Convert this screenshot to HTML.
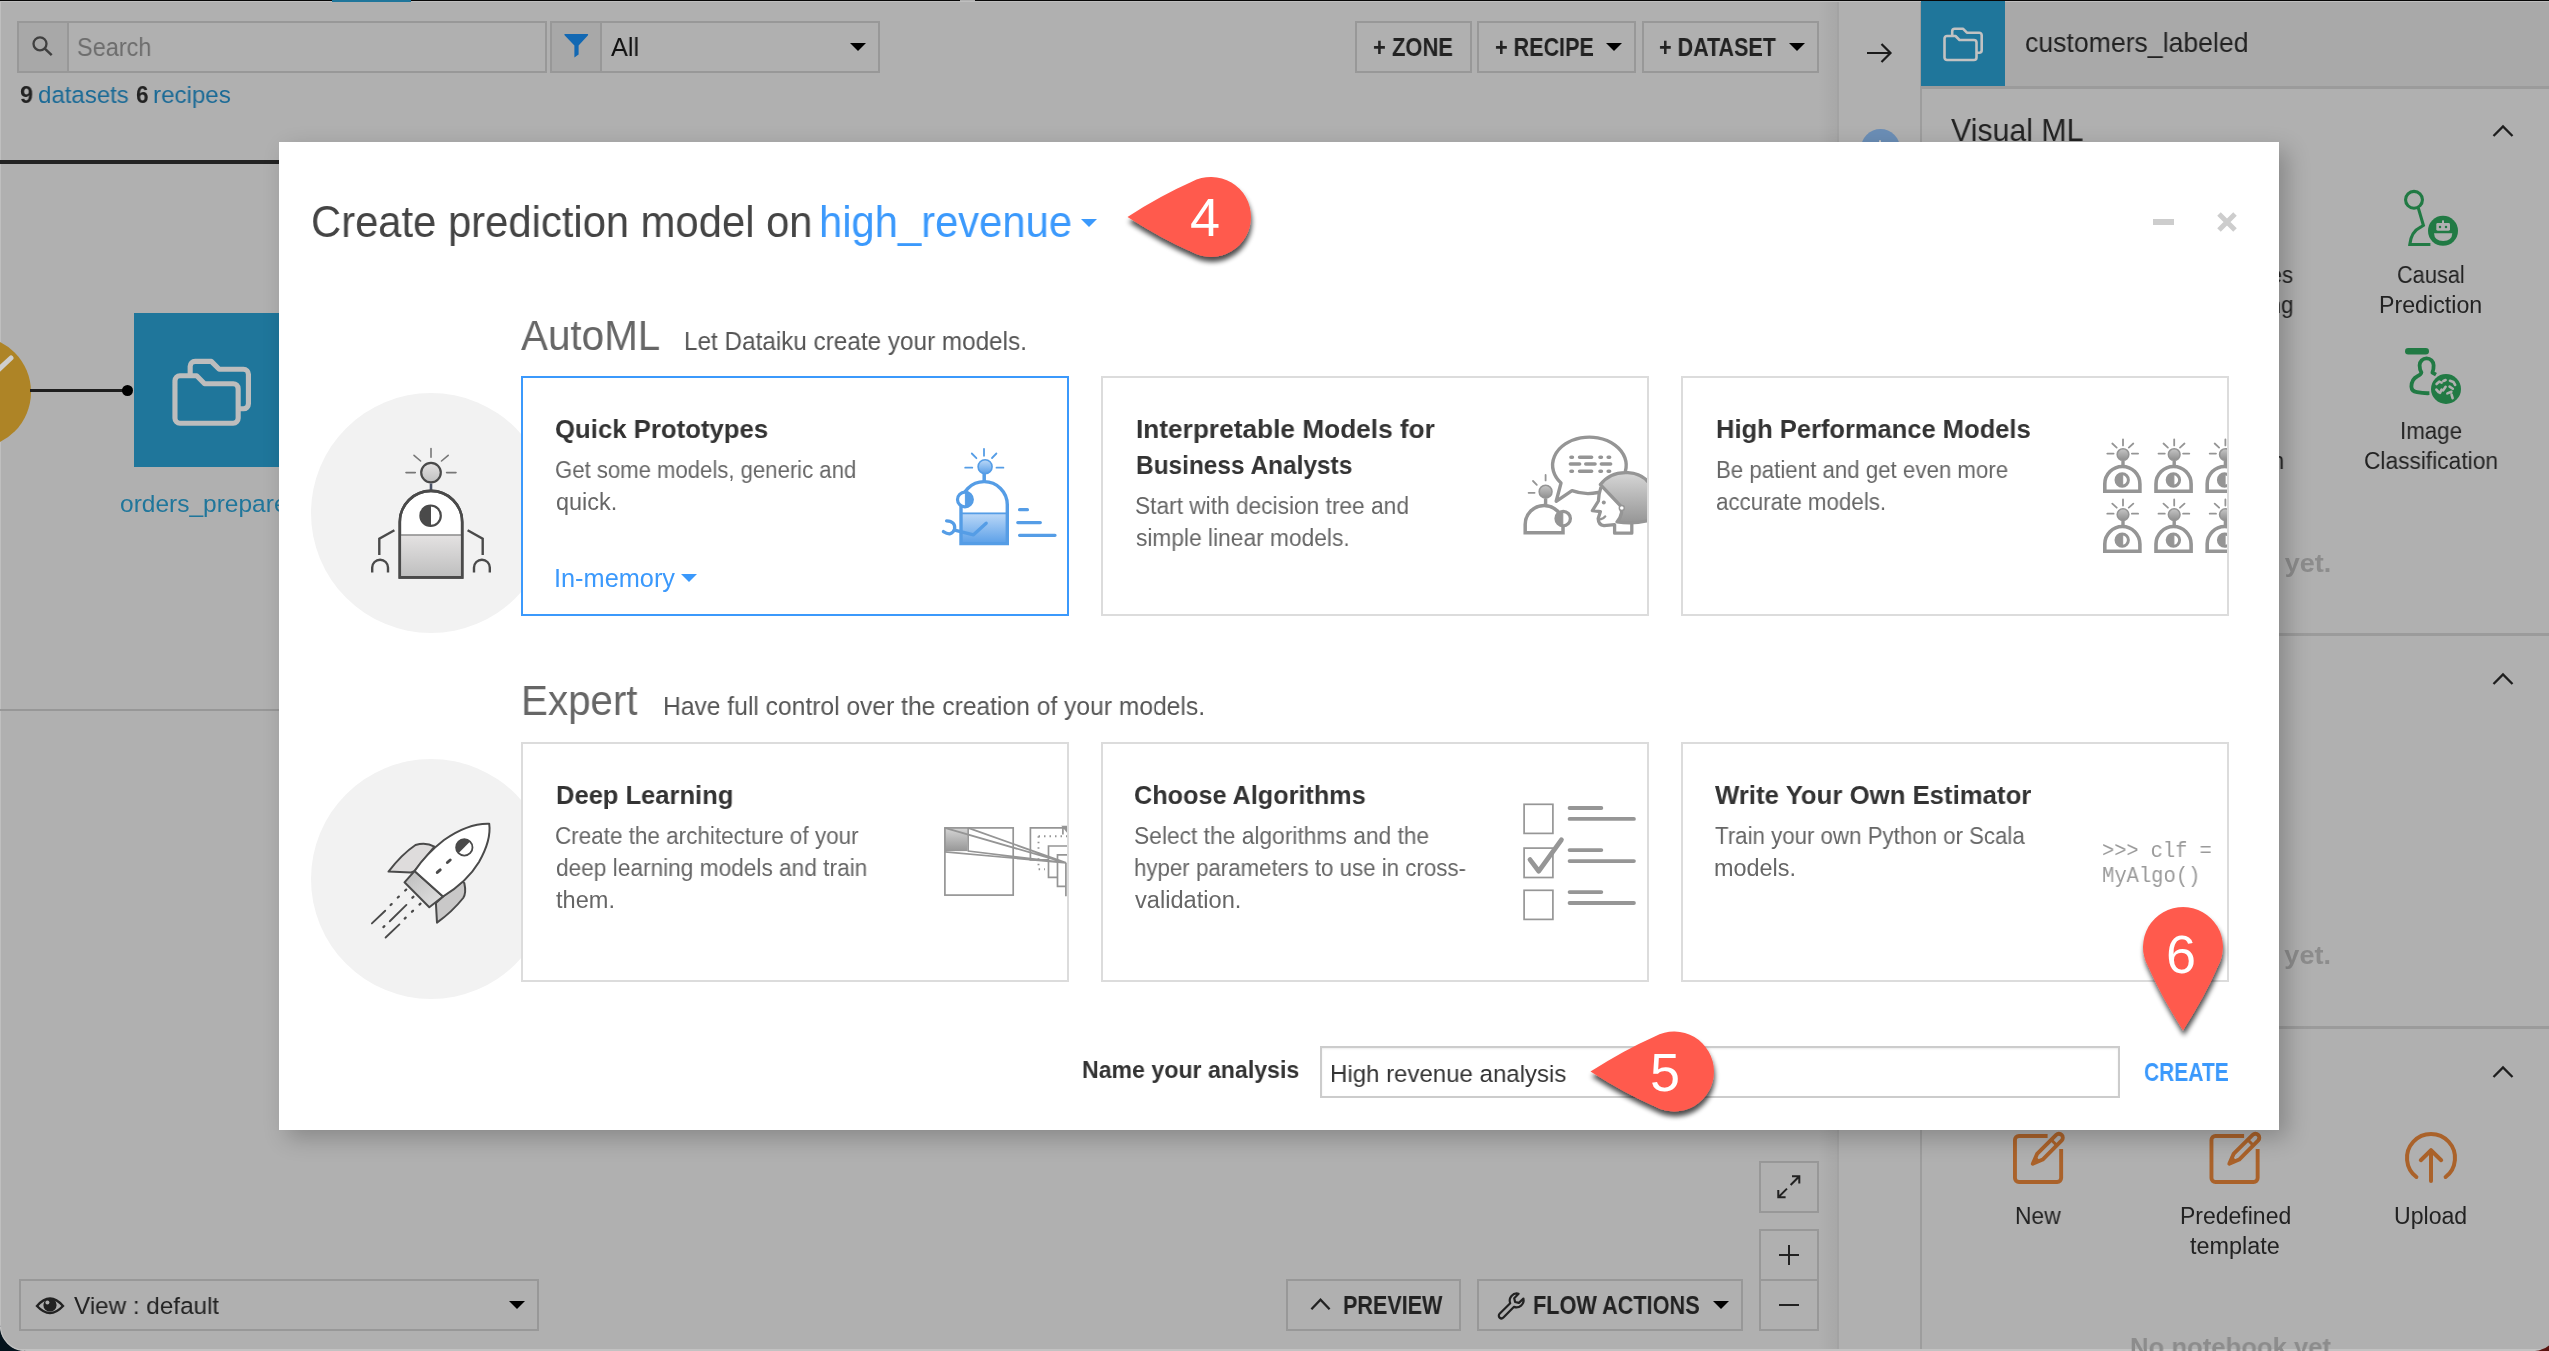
<!DOCTYPE html>
<html><head><meta charset="utf-8"><title>Create prediction model</title>
<style>
html,body{margin:0;padding:0}
html{width:2549px;height:1351px;overflow:hidden}
body{width:2549px;height:1351px;overflow:hidden;position:relative;background:#b0b0b0;font-family:"Liberation Sans",sans-serif}
.a{position:absolute;box-sizing:border-box}
.t{position:absolute;white-space:pre;transform-origin:0 0;display:block;will-change:transform}
.bx{position:absolute;box-sizing:border-box;border:2px solid #989898}
.card{position:absolute;box-sizing:border-box;border:2px solid #dcdcdc;background:#fff;z-index:15;overflow:hidden}
svg{position:absolute;overflow:visible}
.car{position:absolute;width:0;height:0;border-left:8px solid transparent;border-right:8px solid transparent;border-top:8.5px solid #000;margin-left:-0.4px}
</style></head><body>
<!-- top window edge -->
<div class="a" style="left:0;top:0;width:2549px;height:1px;background:#080808"></div>
<div class="a" style="left:0;top:1px;width:2549px;height:1px;background:#bfbfbf"></div>
<div class="a" style="left:0;top:1px;width:1px;height:1336px;background:#bfbfbf"></div>
<div class="a" style="left:332px;top:0;width:79px;height:1.5px;background:#1f769b"></div>
<div class="a" style="left:960px;top:0;width:15px;height:1px;background:#b0b0b0"></div>
<!-- search -->
<div class="bx" style="left:17px;top:21px;width:530px;height:52px"></div>
<div class="a" style="left:19px;top:23px;width:48px;height:48px;background:#a8a8a8"></div>
<div class="a" style="left:67px;top:23px;width:2px;height:48px;background:#989898"></div>
<svg style="left:30px;top:34px" width="26" height="26" viewBox="0 0 26 26"><circle cx="10" cy="9.8" r="6.5" fill="none" stroke="#404040" stroke-width="2.3"/><path d="M14.8 14.6 L21.7 21.1" stroke="#404040" stroke-width="2.6" fill="none"/></svg>
<!-- filter -->
<div class="bx" style="left:550px;top:21px;width:330px;height:52px"></div>
<div class="a" style="left:552px;top:23px;width:48px;height:48px;background:#a8a8a8"></div>
<div class="a" style="left:600px;top:23px;width:2px;height:48px;background:#989898"></div>
<svg style="left:564px;top:33px" width="25" height="25" viewBox="0 0 25 25"><path d="M0.6 1 H23.8 Q24.6 1.6 23.8 2.6 L14.6 12.6 V21.6 L10.4 24.4 V12.6 L0.8 2.6 Q0 1.6 0.6 1 Z" fill="#1268b3"/></svg>
<div class="car" style="left:850px;top:43px"></div>
<!-- top buttons -->
<div class="bx" style="left:1355px;top:21px;width:117px;height:52px"></div>
<div class="bx" style="left:1477px;top:21px;width:159px;height:52px"></div>
<div class="bx" style="left:1642px;top:21px;width:177px;height:52px"></div>
<div class="car" style="left:1606.6px;top:43px"></div>
<div class="car" style="left:1789.4px;top:43px"></div>
<!-- flow -->
<div class="a" style="left:0;top:160px;width:300px;height:4px;background:#232323"></div>
<div class="a" style="left:0;top:709px;width:300px;height:2px;background:#979797"></div>
<div class="a" style="left:-82px;top:335.6px;width:112.8px;height:112.8px;border-radius:50%;background:#ae8426"></div>
<svg style="left:0;top:350px" width="20" height="30" viewBox="0 0 20 30"><path d="M-4 22 L11 8" stroke="#cfcfcf" stroke-width="5" stroke-linecap="round"/></svg>
<div class="a" style="left:30px;top:389px;width:97px;height:3px;background:#1e1e1e"></div>
<div class="a" style="left:121.5px;top:385px;width:11px;height:11px;border-radius:50%;background:#000"></div>
<div class="a" style="left:134px;top:313px;width:154px;height:154px;background:#1f769b"></div>
<svg style="left:172px;top:358px" width="79" height="68" viewBox="0 0 40 34.4"><g fill="none" stroke="#bdbdbd" stroke-width="2.6" stroke-linejoin="round"><path d="M1.5 11.5 a2.5 2.5 0 0 1 2.5 -2.5 h8.5 l4 4 h14.5 a2.5 2.5 0 0 1 2.5 2.5 v15 a2.5 2.5 0 0 1 -2.5 2.5 h-27 a2.5 2.5 0 0 1 -2.5 -2.5 z"/><path d="M9.2 8.6 v-4.4 a2.5 2.5 0 0 1 2.5 -2.5 h8.2 l4 4 h12.3 a2.5 2.5 0 0 1 2.5 2.5 v15 a2.5 2.5 0 0 1 -2.5 2.5 h-2.4"/></g></svg>
<!-- bottom bar -->
<div class="bx" style="left:19px;top:1279px;width:520px;height:52px"></div>
<svg style="left:36px;top:1293px" width="28" height="26" viewBox="0 0 28 26"><path d="M1 13 Q14 -2 27 13 Q14 27 1 13 Z" fill="none" stroke="#222" stroke-width="2.4"/><circle cx="14" cy="12" r="6.6" fill="#222"/><circle cx="11.4" cy="9.4" r="2" fill="#b0b0b0"/></svg>
<div class="car" style="left:509px;top:1301px"></div>
<div class="bx" style="left:1285.5px;top:1279px;width:175.5px;height:52px"></div>
<svg style="left:1310px;top:1297px" width="21" height="14.6" viewBox="0 0 23 16"><path d="M1.5 13.5 L11.5 3 L21.5 13.5" fill="none" stroke="#222" stroke-width="2.5"/></svg>
<div class="bx" style="left:1476.5px;top:1279px;width:266.5px;height:52px"></div>
<svg style="left:1497px;top:1291px" width="29" height="29" viewBox="0 0 29 29"><path d="M26.4 7.6 a7.2 7.2 0 0 1 -9.6 8.3 L6.4 26.6 a2.6 2.6 0 0 1 -3.8 -3.8 L13.2 12.3 a7.2 7.2 0 0 1 8.4 -9.6 L17.2 7.2 l0.9 3.8 3.8 0.9 z" fill="none" stroke="#222" stroke-width="2.2" stroke-linejoin="round"/></svg>
<div class="car" style="left:1713.7px;top:1301px"></div>
<div class="bx" style="left:1759px;top:1161px;width:60px;height:52px"></div>
<svg style="left:1776.2px;top:1174.2px" width="25.6" height="25.6" viewBox="0 0 28 28"><g fill="none" stroke="#222" stroke-width="2.2"><path d="M16 12 L25.5 2.5 M17.5 2.5 h8 v8"/><path d="M12 16 L2.5 25.5 M10.5 25.5 h-8 v-8"/></g></svg>
<div class="bx" style="left:1759px;top:1229px;width:60px;height:102px"></div>
<div class="a" style="left:1759px;top:1279px;width:60px;height:2px;background:#989898"></div>
<div class="a" style="left:1779px;top:1254px;width:20px;height:2px;background:#222"></div>
<div class="a" style="left:1788px;top:1245px;width:2px;height:20px;background:#222"></div>
<div class="a" style="left:1779px;top:1304px;width:20px;height:2px;background:#222"></div>
<!-- right panel -->
<div class="a" style="left:1818px;top:2px;width:20px;height:1349px;background:linear-gradient(to right,rgba(0,0,0,0),rgba(0,0,0,0.05))"></div>
<div class="a" style="left:1837px;top:2px;width:2px;height:1349px;background:#a3a3a3"></div>
<div class="a" style="left:1919.5px;top:2px;width:2px;height:1349px;background:#9d9d9d"></div>
<div class="a" style="left:1921px;top:2px;width:628px;height:84px;background:#a9a9a9"></div>
<div class="a" style="left:1921px;top:86px;width:628px;height:2.5px;background:#9b9b9b"></div>
<div class="a" style="left:1921px;top:1px;width:84px;height:85px;background:#1f769b"></div>
<svg style="left:1943px;top:27px" width="40" height="34.4" viewBox="0 0 40 34.4"><g fill="none" stroke="#c2c2c2" stroke-width="2.6" stroke-linejoin="round"><path d="M1.5 11.5 a2.5 2.5 0 0 1 2.5 -2.5 h8.5 l4 4 h14.5 a2.5 2.5 0 0 1 2.5 2.5 v15 a2.5 2.5 0 0 1 -2.5 2.5 h-27 a2.5 2.5 0 0 1 -2.5 -2.5 z"/><path d="M9.2 8.6 v-4.4 a2.5 2.5 0 0 1 2.5 -2.5 h8.2 l4 4 h12.3 a2.5 2.5 0 0 1 2.5 2.5 v15 a2.5 2.5 0 0 1 -2.5 2.5 h-2.4"/></g></svg>
<svg style="left:1866px;top:41px" width="26" height="24" viewBox="0 0 26 24"><path d="M1 12 H24 M15.5 3 L24.5 12 L15.5 21" fill="none" stroke="#1a1a1a" stroke-width="2.2"/></svg>
<div class="a" style="left:1860.5px;top:129px;width:39px;height:39px;border-radius:50%;background:#6b8eb6"></div>
<div class="a" style="left:1878.5px;top:139.5px;width:2.6px;height:8px;border-radius:1.3px;background:#c8c8c8"></div>
<!-- chevrons -->
<svg style="left:2492px;top:124px" width="22" height="14" viewBox="0 0 22 14"><path d="M1.5 12 L11 2.5 L20.5 12" fill="none" stroke="#1e1e1e" stroke-width="2.3"/></svg>
<svg style="left:2492px;top:672px" width="22" height="14" viewBox="0 0 22 14"><path d="M1.5 12 L11 2.5 L20.5 12" fill="none" stroke="#1e1e1e" stroke-width="2.3"/></svg>
<svg style="left:2492px;top:1064.5px" width="22" height="14" viewBox="0 0 22 14"><path d="M1.5 12 L11 2.5 L20.5 12" fill="none" stroke="#1e1e1e" stroke-width="2.3"/></svg>
<div class="a" style="left:1921px;top:633px;width:628px;height:2.5px;background:#9b9b9b"></div>
<div class="a" style="left:1921px;top:1026px;width:628px;height:2.5px;background:#9b9b9b"></div>
<!-- causal prediction icon -->
<svg style="left:0;top:0" width="2549" height="1351" viewBox="0 0 2549 1351">
<g fill="none" stroke="#217a44" stroke-width="3.1" stroke-linejoin="miter"><circle cx="2414" cy="199.8" r="8.45"/><path d="M2418.2 207.6 L2423.4 225.4 L2420.6 227.2 Q2411.2 231.6 2409.8 244.5 H2430.4"/></g>
<circle cx="2443" cy="230.8" r="15" fill="#217a44"/>
<g fill="#b0b0b0"><rect x="2442" y="220.4" width="2" height="3.4"/><rect x="2436.3" y="223" width="13.7" height="7.7" rx="1.4"/><path d="M2434 233.3 H2452.3 Q2452 241 2443.2 241 Q2434.4 241 2434 233.3 Z"/></g>
<circle cx="2440" cy="227" r="1.25" fill="#217a44"/><circle cx="2446" cy="227" r="1.25" fill="#217a44"/>
<!-- image classification icon -->
<rect x="2405" y="348" width="24" height="6.5" rx="3.25" fill="#217a44"/>
<path d="M2436 374.6 L2432.4 372.6 Q2433.8 369 2433.6 365.3 A7 7 0 1 0 2419.6 365.3 Q2419.6 369.4 2421.4 372.4 Q2421.2 374.6 2417.4 376.2 Q2411.6 379 2411.4 386.6 Q2411.6 391.4 2417 392.2 Q2423 393.4 2429.4 393.2" fill="none" stroke="#217a44" stroke-width="3.8" stroke-linejoin="round"/>
<circle cx="2446" cy="389" r="15" fill="#217a44"/>
<g fill="none" stroke="#b0b0b0" stroke-width="2.6" stroke-linecap="round" stroke-linejoin="round"><path d="M2436.6 384 l2.6 -2.4 2.4 1 M2436.4 389.6 l2.2 2.6 M2441.6 389.6 l-1.6 3.2 M2443.4 381 l2.2 -1 M2445.6 386.8 l-2.4 3.6 M2450 380.8 l3.4 1.2 1.8 3 M2449.6 386.6 l3.2 2.2 M2447.4 393.4 l4 -1.6 M2451.6 394.6 l1 3.6"/></g>
</svg>
<!-- New / Predefined / Upload icons -->
<svg style="left:0;top:0" width="2549" height="1351" viewBox="0 0 2549 1351"><defs><g id="pen" fill="none" stroke="#aa622a" stroke-width="3.9" stroke-linejoin="round"><path d="M34.6 1.95 H5.95 a4 4 0 0 0 -4 4 V44.05 a4 4 0 0 0 4 4 H44.15 a4 4 0 0 0 4 -4 V15"/><path d="M19.8 29.8 L29.66 25.52 L48.75 6.43 A3.95 3.95 0 0 0 43.17 0.85 L24.08 19.94 Z"/><path d="M43.8 11.38 L38.22 5.8" stroke-width="3"/><path d="M20.6 29 L26 27 L22.8 23.6 Z" fill="#aa622a" stroke-width="2"/></g></defs>
<use href="#pen" x="2013" y="1134"/><use href="#pen" x="2209.5" y="1134"/>
<g fill="none" stroke="#aa622a" stroke-width="4" stroke-linecap="round" stroke-linejoin="round"><path d="M2416.4 1177 A24 24 0 1 1 2445.6 1177"/><path d="M2431 1181 V1150.6 M2420.8 1160.2 L2431 1150.2 L2441.2 1160.2"/></g>
</svg>
<!-- window bottom corners -->
<div class="a" style="left:20px;top:1349px;width:2520px;height:2px;background:#c2c2c2"></div>
<svg style="left:0;top:1325px" width="26" height="26" viewBox="0 0 26 26"><path d="M0 0 V26 H26 A26 26 0 0 1 0 0 Z" fill="#03121c"/><path d="M0.5 2 A25 25 0 0 0 24 25.5" fill="none" stroke="#c2c2c2" stroke-width="1.2"/></svg>
<svg style="left:2535px;top:1345px" width="14" height="6" viewBox="0 0 14 6"><path d="M14 0.5 V6 H0 Q9 5 14 0.5 Z" fill="#5a1410"/></svg>

<!-- modal -->
<div class="a" style="left:279px;top:142px;width:2000px;height:988px;background:#fff;box-shadow:8px 8px 22px rgba(0,0,0,0.23);z-index:10"></div>
<!-- title caret -->
<div class="car" style="left:1081.4px;top:219px;z-index:20;border-top:8.2px solid #3b99fc"></div>
<!-- minimise / close -->
<div class="a" style="left:2152.5px;top:218.5px;width:21px;height:6px;background:#cdcdcd;z-index:20"></div>
<svg style="left:2217px;top:211.5px;z-index:20" width="20" height="20" viewBox="0 0 20 20"><path d="M2 2 L18 18 M18 2 L2 18" stroke="#cdcdcd" stroke-width="5" fill="none"/></svg>
<!-- illustration circles -->
<div class="a" style="left:311px;top:393px;width:240px;height:240px;border-radius:50%;background:#f2f2f2;z-index:12"></div>
<div class="a" style="left:311px;top:759px;width:240px;height:240px;border-radius:50%;background:#f2f2f2;z-index:12"></div>
<!-- cards -->
<div class="card" style="left:521px;top:376px;width:548px;height:240px;border-color:#3b99fc"></div>
<div class="card" style="left:1101px;top:376px;width:548px;height:240px"></div>
<div class="card" style="left:1681px;top:376px;width:548px;height:240px"></div>
<div class="card" style="left:521px;top:742px;width:548px;height:240px"></div>
<div class="card" style="left:1101px;top:742px;width:548px;height:240px"></div>
<div class="card" style="left:1681px;top:742px;width:548px;height:240px"></div>
<!-- in-memory caret -->
<div class="car" style="left:681.4px;top:574.4px;z-index:20;border-top:8.2px solid #3b99fc"></div>
<!-- input -->
<div class="a" style="left:1320px;top:1046px;width:800px;height:52px;border:2px solid #ccc;background:#fff;box-shadow:inset 0 1px 2px rgba(0,0,0,0.08);z-index:16"></div>

<svg style="left:0;top:0;z-index:18" width="2549" height="1351" viewBox="0 0 2549 1351">
<defs>
<linearGradient id="gG" x1="0" y1="0" x2="0" y2="1"><stop offset="0" stop-color="#e4e2e2"/><stop offset="1" stop-color="#bfbfbf"/></linearGradient>
<linearGradient id="gB" x1="0" y1="0" x2="0" y2="1"><stop offset="0" stop-color="#bdd9f7"/><stop offset="1" stop-color="#5a9fe8"/></linearGradient>
<linearGradient id="gK" x1="0" y1="0" x2="0" y2="1"><stop offset="0" stop-color="#d6d6d6"/><stop offset="1" stop-color="#969696"/></linearGradient>
<linearGradient id="gBulb" x1="0" y1="0" x2="0" y2="1"><stop offset="0" stop-color="#c6c6c6"/><stop offset="1" stop-color="#8f8f8f"/></linearGradient>
<linearGradient id="gR" x1="0" y1="0" x2="1" y2="1"><stop offset="0" stop-color="#bdbdbd"/><stop offset="1" stop-color="#e2e2e2"/></linearGradient>
<clipPath id="c2"><rect x="1103" y="378" width="544" height="236"/></clipPath>
<clipPath id="c3"><rect x="1683" y="378" width="544" height="236"/></clipPath>
<clipPath id="c4"><rect x="523" y="744" width="544" height="236"/></clipPath>
<g id="mini"><g fill="none" stroke="#959595" stroke-width="1.8" stroke-linecap="round"><path d="M0 -15.2 V-9.1 M-10.7 -11 L-6.3 -6.9 M10.3 -11 L5.8 -6.9 M-15.7 -0.9 H-9.4 M8.9 -0.9 H15.1"/></g><circle cx="0" cy="0" r="5.8" fill="url(#gBulb)" stroke="#959595" stroke-width="1.6"/><path d="M0 6.3 V11" stroke="#959595" stroke-width="3.4" fill="none"/><path d="M-18.2 36.7 V29.5 A17.55 17.55 0 0 1 16.9 29.5 V36.7 Z" fill="#fff" stroke="#959595" stroke-width="3.6"/><circle cx="-0.8" cy="25.5" r="6.2" fill="#fff" stroke="#959595" stroke-width="3"/><path d="M-0.3 19.3 A6.2 6.2 0 0 0 -0.3 31.7 Z" fill="#959595" stroke="#959595" stroke-width="1"/></g>
</defs>
<!-- big robot -->
<g fill="none" stroke="#777" stroke-width="1.6" stroke-linecap="round"><path d="M431 448.6 V457.3 M414 455.3 L420.6 461 M448.2 455.3 L441.5 461 M406 472.6 H415.3 M446.6 472.6 H456"/></g>
<circle cx="431" cy="472.6" r="9.8" fill="url(#gG)" stroke="#4a4a4a" stroke-width="2.2"/>
<path d="M431 483.5 V490.5" stroke="#4a5266" stroke-width="2.6"/>
<path d="M399.8 577.4 V522 A31.2 31.2 0 0 1 462.2 522 V577.4 Z" fill="#fff" stroke="#4a4a4a" stroke-width="2.6"/>
<rect x="401.1" y="535.2" width="59.8" height="41" fill="url(#gG)"/>
<path d="M401 535 H461" stroke="#8a8a8a" stroke-width="1.6"/>
<path d="M399.8 577.4 V522 A31.2 31.2 0 0 1 462.2 522 V577.4 Z" fill="none" stroke="#4a4a4a" stroke-width="2.6"/>
<circle cx="430.6" cy="515.7" r="10.2" fill="#fff" stroke="#4a4a4a" stroke-width="2.2"/>
<path d="M431 505.5 A10.2 10.2 0 0 0 431 525.9 Z" fill="#4a4a4a"/>
<g fill="none" stroke="#4a4a4a" stroke-width="2.4" stroke-linecap="butt"><path d="M394.4 530.3 L379.3 538.8 V555"/><path d="M372.2 572.4 V567.6 A7.9 7.9 0 0 1 388 567.6 V572.4"/><path d="M467.6 530.3 L482.7 538.8 V555"/><path d="M474 572.4 V567.6 A7.9 7.9 0 0 1 489.8 567.6 V572.4"/></g>
<!-- rocket -->
<g stroke="#4a4a4a" stroke-width="2" stroke-linejoin="round">
<path d="M434.4 846.6 Q426 842 415.5 845 Q402 854 388.5 871.6 L411 872.4 L414.5 871.1 Z" fill="#dedcdc"/>
<path d="M462.5 881.7 L464.3 883 Q466.5 893 463.2 898 Q452 912 437 922.6 L435.9 903 L443 896.5 Z" fill="#c9c8c8"/>
<path d="M414.5 871.1 L443 896.5 L429.3 907.2 L404.5 882.3 Z" fill="url(#gR)"/>
<path d="M489.2 823.7 Q491.5 840 479 862 Q467 882 443 896.5 L414.5 871.1 Q426 854 444 840 Q468 823 489.2 823.7 Z" fill="#fff"/>
</g>
<circle cx="464.3" cy="847.4" r="8.2" fill="#fff" stroke="#4a4a4a" stroke-width="1.8"/>
<path d="M470.1 841.6 A8.2 8.2 0 0 0 458.5 853.2 Z" fill="#4a4a4a"/>
<g stroke="#4a4a4a" stroke-width="3" stroke-linecap="round"><path d="M447.4 862.5 L450.2 860"/><path d="M437.3 872.4 L440.2 869.9"/></g>
<g fill="none" stroke="#4a4a4a" stroke-width="1.9" stroke-linecap="round">
<path d="M385.2 910.7 L371.9 923.4 M406.4 904.9 L389.8 921.3 M399.4 924.4 L385.6 937.5"/>
<path d="M405.2 890.5 l1 -0.9 M397.8 897.5 l1 -0.9 M390.6 905 l1 -0.9 M412.4 897.7 l1 -0.9 M383.4 927.1 l1 -0.9 M419.5 904.6 l1 -0.9 M412 911.7 l1 -0.9 M404.7 918.6 l1 -0.9" stroke-width="2.3"/>
</g>
<!-- card1 blue robot -->
<g fill="none" stroke="#559de6" stroke-width="1.8" stroke-linecap="round"><path d="M984 448.8 V455.8 M971.8 453.5 L976.4 458.2 M996.4 453.5 L992 458 M965.2 467.7 H972.3 M996.5 467.7 H1003.4"/></g>
<circle cx="985.1" cy="466.7" r="7" fill="url(#gB)" stroke="#559de6" stroke-width="1.6"/>
<path d="M984.2 474 V481" stroke="#559de6" stroke-width="3.5"/>
<rect x="961" y="512.8" width="46" height="31" fill="url(#gB)"/>
<path d="M961 543.6 V504.8 A23.15 23.15 0 0 1 1007.3 504.8 V543.6 Z" fill="none" stroke="#559de6" stroke-width="3.4"/>
<path d="M961 513.4 H1007" stroke="#559de6" stroke-width="1.8"/>
<circle cx="964.9" cy="499.5" r="7.4" fill="#fff" stroke="#559de6" stroke-width="3.2"/>
<path d="M965.4 492.1 A7.4 7.4 0 0 1 965.4 506.9 Z" fill="#559de6" stroke="#559de6" stroke-width="1"/>
<g fill="none" stroke="#559de6" stroke-width="3.3" stroke-linecap="round" stroke-linejoin="round"><path d="M946.6 520.9 Q955.6 521.4 954.6 529 Q951.6 537 943.4 531.6"/><path d="M955.6 530.4 L973.5 534.8 L986.2 523.2"/><path d="M1019.6 509.7 H1027.4 M1017.8 522.6 H1040.3 M1019.6 535.3 H1055"/></g>
<!-- card2 icon -->
<g clip-path="url(#c2)">
<path d="M1625.4 471 A36.8 28.1 0 1 0 1561 483.1 L1556.2 501.3 L1572 490.7 A36.8 28.1 0 0 0 1598 492.5" fill="#fff" stroke="#959595" stroke-width="3.4" stroke-linejoin="round" stroke-linecap="round"/>
<g fill="none" stroke="#959595" stroke-width="3.6" stroke-linecap="round"><path d="M1571 457.3 h1.4 M1579.6 457.3 H1591.6 M1600 457.3 h1.4 M1608.2 457.3 h1.4 M1570.4 464 H1579.6 M1585.8 464 H1595 M1601.4 464 H1610.6 M1571 471.2 h1.4 M1579.6 471.2 H1591.6 M1600 471.2 h1.4 M1608.2 471.2 h1.4"/></g>
<g fill="none" stroke="#959595" stroke-width="1.8" stroke-linecap="round"><path d="M1545.6 475 V480.4 M1533 481 L1536.8 484.8 M1528.6 492.8 H1534.6"/></g>
<circle cx="1545.6" cy="491.7" r="6.4" fill="url(#gBulb)" stroke="#959595" stroke-width="1.6"/>
<path d="M1545.6 498.6 V505" stroke="#959595" stroke-width="3.4"/>
<path d="M1525.2 532.8 V524.4 A18.9 18.9 0 0 1 1563 524.4 V532.8 Z" fill="#fff" stroke="#959595" stroke-width="3.5"/>
<circle cx="1563.2" cy="518.6" r="7.2" fill="#fff" stroke="#959595" stroke-width="3.3"/>
<path d="M1562.8 511.4 A7.2 7.2 0 0 0 1562.8 525.8 Z" fill="#959595" stroke="#959595" stroke-width="1"/>
<!-- person -->
<path d="M1601 487 Q1598.6 494 1598.4 501 L1592.4 510.6 L1600.4 511.6 L1598.2 518.6 Q1598.4 525 1604 525.6 L1614.6 524.6 V533.2 H1631.8 V521" fill="#fff" stroke="#959595" stroke-width="3.3" stroke-linejoin="round"/>
<path d="M1600.4 484.6 Q1610 471.6 1628 472.6 Q1650 474 1654 496 L1654 519 Q1636 524.6 1617 521.8 Q1620.4 518.4 1621.6 512.6 L1621 506.4 Z" fill="url(#gK)" stroke="#959595" stroke-width="3.3" stroke-linejoin="round"/>
<circle cx="1621.8" cy="508" r="2.5" fill="#fff" stroke="#959595" stroke-width="1.4"/>
<circle cx="1603.8" cy="502.5" r="2" fill="#959595"/>
<path d="M1600.6 519.2 Q1603.6 518.8 1605.2 516.4" fill="none" stroke="#959595" stroke-width="2.4" stroke-linecap="round"/>
</g>
<!-- card3 icon -->
<g clip-path="url(#c3)">
<use href="#mini" x="2123" y="454.5"/><use href="#mini" x="2174.2" y="454.5"/><use href="#mini" x="2225.4" y="454.5"/>
<use href="#mini" x="2123" y="514.6"/><use href="#mini" x="2174.2" y="514.6"/><use href="#mini" x="2225.4" y="514.6"/>
</g>
<!-- card4 deep learning -->
<g clip-path="url(#c4)" fill="none" stroke="#959595" stroke-width="1.7">
<rect x="944.9" y="827.9" width="22.4" height="23.2" fill="url(#gK)" stroke="none"/>
<rect x="944.9" y="827.9" width="68.3" height="67.2"/>
<path d="M968.1 827.9 V851.5"/>
<path d="M944.9 827.9 L1066.2 862.9 M968.1 827.9 L1066.2 862.9 M944.9 851.8 L1066.2 862.9 M968.1 851 L1066.2 862.9"/>
<path d="M1068 827.9 H1030.4 V859.8 H1048"/>
<path d="M1038.5 836.3 H1068 M1038.5 836.3 V869.2 H1045" stroke-dasharray="1.5 4" stroke-width="1.9"/>
<path d="M1068 846 H1048.5 V877.4 H1057"/>
<path d="M1068 854.8 H1057.5 V886.4 H1066"/>
<path d="M1065.9 862.9 V896.3"/>
<path d="M1062.9 827.9 V834.4 M1063 826.5 L1067.5 832 V826.5 Z" fill="#959595"/>
</g>
<!-- card5 checklist -->
<g fill="none" stroke="#969696">
<g stroke-width="1.7"><rect x="1524.1" y="804.3" width="28.8" height="29.1"/><rect x="1524.1" y="848.1" width="28.8" height="29.4"/><rect x="1524.1" y="890.3" width="28.8" height="29.1"/></g>
<g stroke-width="3.9" stroke-linecap="round"><path d="M1569.6 808 H1601.3 M1569.6 818.9 H1633.9 M1569.6 850.1 H1601.3 M1569.6 861.1 H1633.9 M1569.6 892.1 H1601.3 M1569.6 903 H1633.9"/></g>
<path d="M1530 859.6 L1538.8 871.2 L1561.4 839.8" stroke-width="4.8" stroke-linecap="round" stroke-linejoin="round"/>
</g>
</svg>

<span class="t" style="left:76.9px;top:33.8px;font-size:26.5px;line-height:26.5px;color:#6d6d6d;transform:scaleX(0.8854);">Search</span>
<span class="t" style="left:19.6px;top:82.5px;font-size:24.5px;line-height:24.5px;color:#222;font-weight:bold;transform:scaleX(0.9538);">9</span>
<span class="t" style="left:37.9px;top:82.5px;font-size:24.5px;line-height:24.5px;color:#1a6a96;transform:scaleX(0.9807);">datasets</span>
<span class="t" style="left:135.6px;top:82.5px;font-size:24.5px;line-height:24.5px;color:#222;font-weight:bold;transform:scaleX(0.9231);">6</span>
<span class="t" style="left:153.4px;top:82.5px;font-size:24.5px;line-height:24.5px;color:#1a6a96;transform:scaleX(0.9855);">recipes</span>
<span class="t" style="left:610.6px;top:34.6px;font-size:25.5px;line-height:25.5px;color:#111;transform:scaleX(0.9897);">All</span>
<span class="t" style="left:1373.0px;top:34.6px;font-size:25.5px;line-height:25.5px;color:#222;font-weight:bold;transform:scaleX(0.8616);">+ ZONE</span>
<span class="t" style="left:1494.9px;top:34.6px;font-size:25.5px;line-height:25.5px;color:#222;font-weight:bold;transform:scaleX(0.8446);">+ RECIPE</span>
<span class="t" style="left:1659.2px;top:34.6px;font-size:25.5px;line-height:25.5px;color:#222;font-weight:bold;transform:scaleX(0.8433);">+ DATASET</span>
<span class="t" style="left:2024.5px;top:28.9px;font-size:27.5px;line-height:27.5px;color:#222;transform:scaleX(0.9684);">customers_labeled</span>
<span class="t" style="left:1950.9px;top:114.5px;font-size:31.5px;line-height:31.5px;color:#222;transform:scaleX(0.9613);">Visual ML</span>
<span class="t" style="left:2397.4px;top:263.8px;font-size:23.0px;line-height:23.0px;color:#222;transform:scaleX(0.9455);">Causal</span>
<span class="t" style="left:2379.4px;top:293.8px;font-size:23.0px;line-height:23.0px;color:#222;transform:scaleX(1.0091);">Prediction</span>
<span class="t" style="left:2399.8px;top:419.8px;font-size:23.0px;line-height:23.0px;color:#222;transform:scaleX(0.9700);">Image</span>
<span class="t" style="left:2363.8px;top:449.8px;font-size:23.0px;line-height:23.0px;color:#222;transform:scaleX(0.9888);">Classification</span>
<span class="t" style="left:2174.6px;top:263.8px;font-size:23.0px;line-height:23.0px;color:#222;transform:scaleX(0.9700);">Time Series</span>
<span class="t" style="left:2176.5px;top:293.8px;font-size:23.0px;line-height:23.0px;color:#222;transform:scaleX(0.9700);">Forecasting</span>
<span class="t" style="left:2189.5px;top:449.8px;font-size:23.0px;line-height:23.0px;color:#222;transform:scaleX(0.9700);">Detection</span>
<span class="t" style="left:2154.1px;top:550.2px;font-size:26.0px;line-height:26.0px;color:#8c8c8c;font-weight:bold;transform:scaleX(1.0400);">No model yet.</span>
<span class="t" style="left:2083.4px;top:942.2px;font-size:26.0px;line-height:26.0px;color:#8c8c8c;font-weight:bold;transform:scaleX(1.0400);">No code recipe yet.</span>
<span class="t" style="left:2129.6px;top:1334.2px;font-size:26.0px;line-height:26.0px;color:#8c8c8c;font-weight:bold;transform:scaleX(0.9871);height:17px;overflow:hidden;">No notebook yet</span>
<span class="t" style="left:2015.0px;top:1204.8px;font-size:23.0px;line-height:23.0px;color:#222;transform:scaleX(0.9912);">New</span>
<span class="t" style="left:2179.5px;top:1204.8px;font-size:23.0px;line-height:23.0px;color:#222;">Predefined</span>
<span class="t" style="left:2190.0px;top:1234.8px;font-size:23.0px;line-height:23.0px;color:#222;transform:scaleX(1.0180);">template</span>
<span class="t" style="left:2394.0px;top:1204.8px;font-size:23.0px;line-height:23.0px;color:#222;transform:scaleX(1.0043);">Upload</span>
<span class="t" style="left:120.3px;top:491.5px;font-size:24.5px;line-height:24.5px;color:#1f769b;">orders_prepared</span>
<span class="t" style="left:74.0px;top:1293.5px;font-size:24.5px;line-height:24.5px;color:#222;transform:scaleX(0.9896);">View : default</span>
<span class="t" style="left:1342.5px;top:1292.6px;font-size:25.5px;line-height:25.5px;color:#222;font-weight:bold;transform:scaleX(0.8449);">PREVIEW</span>
<span class="t" style="left:1533.0px;top:1292.6px;font-size:25.5px;line-height:25.5px;color:#222;font-weight:bold;transform:scaleX(0.8505);">FLOW ACTIONS</span>
<span class="t" style="left:310.6px;top:201.3px;font-size:43.5px;line-height:43.5px;color:#444;transform:scaleX(0.9602);z-index:20;">Create prediction model on</span>
<span class="t" style="left:819.1px;top:201.3px;font-size:43.5px;line-height:43.5px;color:#3b99fc;transform:scaleX(0.9598);z-index:20;">high_revenue</span>
<span class="t" style="left:521.4px;top:313.8px;font-size:43.0px;line-height:43.0px;color:#666;transform:scaleX(0.9397);z-index:20;">AutoML</span>
<span class="t" style="left:684.4px;top:328.6px;font-size:25.5px;line-height:25.5px;color:#555;transform:scaleX(0.9524);z-index:20;">Let Dataiku create your models.</span>
<span class="t" style="left:521.2px;top:678.8px;font-size:43.0px;line-height:43.0px;color:#666;transform:scaleX(0.9379);z-index:20;">Expert</span>
<span class="t" style="left:663.0px;top:693.6px;font-size:25.5px;line-height:25.5px;color:#555;transform:scaleX(0.9657);z-index:20;">Have full control over the creation of your models.</span>
<span class="t" style="left:554.9px;top:415.8px;font-size:26.5px;line-height:26.5px;color:#333;font-weight:bold;transform:scaleX(0.9712);z-index:20;">Quick Prototypes</span>
<span class="t" style="left:554.9px;top:458.8px;font-size:23.0px;line-height:23.0px;color:#666;transform:scaleX(0.9617);z-index:20;">Get some models, generic and</span>
<span class="t" style="left:555.9px;top:490.8px;font-size:23.0px;line-height:23.0px;color:#666;transform:scaleX(1.0206);z-index:20;">quick.</span>
<span class="t" style="left:553.9px;top:566.0px;font-size:25.0px;line-height:25.0px;color:#3b99fc;transform:scaleX(1.0131);z-index:20;">In-memory</span>
<span class="t" style="left:1135.7px;top:415.8px;font-size:26.5px;line-height:26.5px;color:#333;font-weight:bold;transform:scaleX(0.9902);z-index:20;">Interpretable Models for</span>
<span class="t" style="left:1135.8px;top:451.8px;font-size:26.5px;line-height:26.5px;color:#333;font-weight:bold;transform:scaleX(0.9217);z-index:20;">Business Analysts</span>
<span class="t" style="left:1134.8px;top:494.7px;font-size:23.0px;line-height:23.0px;color:#666;transform:scaleX(0.9875);z-index:20;">Start with decision tree and</span>
<span class="t" style="left:1135.8px;top:526.8px;font-size:23.0px;line-height:23.0px;color:#666;transform:scaleX(0.9886);z-index:20;">simple linear models.</span>
<span class="t" style="left:1715.8px;top:415.8px;font-size:26.5px;line-height:26.5px;color:#333;font-weight:bold;transform:scaleX(0.9626);z-index:20;">High Performance Models</span>
<span class="t" style="left:1715.8px;top:458.8px;font-size:23.0px;line-height:23.0px;color:#666;transform:scaleX(0.9681);z-index:20;">Be patient and get even more</span>
<span class="t" style="left:1715.8px;top:490.8px;font-size:23.0px;line-height:23.0px;color:#666;transform:scaleX(0.9715);z-index:20;">accurate models.</span>
<span class="t" style="left:555.7px;top:781.8px;font-size:26.5px;line-height:26.5px;color:#333;font-weight:bold;transform:scaleX(0.9633);z-index:20;">Deep Learning</span>
<span class="t" style="left:555.1px;top:824.8px;font-size:23.0px;line-height:23.0px;color:#666;transform:scaleX(0.9771);z-index:20;">Create the architecture of your</span>
<span class="t" style="left:555.5px;top:856.8px;font-size:23.0px;line-height:23.0px;color:#666;transform:scaleX(0.9856);z-index:20;">deep learning models and train</span>
<span class="t" style="left:555.5px;top:888.8px;font-size:23.0px;line-height:23.0px;color:#666;transform:scaleX(1.0244);z-index:20;">them.</span>
<span class="t" style="left:1134.0px;top:781.8px;font-size:26.5px;line-height:26.5px;color:#333;font-weight:bold;transform:scaleX(0.9519);z-index:20;">Choose Algorithms</span>
<span class="t" style="left:1134.0px;top:824.8px;font-size:23.0px;line-height:23.0px;color:#666;transform:scaleX(0.9909);z-index:20;">Select the algorithms and the</span>
<span class="t" style="left:1134.0px;top:856.8px;font-size:23.0px;line-height:23.0px;color:#666;transform:scaleX(0.9688);z-index:20;">hyper parameters to use in cross-</span>
<span class="t" style="left:1135.0px;top:888.8px;font-size:23.0px;line-height:23.0px;color:#666;transform:scaleX(1.0276);z-index:20;">validation.</span>
<span class="t" style="left:1715.0px;top:781.8px;font-size:26.5px;line-height:26.5px;color:#333;font-weight:bold;transform:scaleX(0.9721);z-index:20;">Write Your Own Estimator</span>
<span class="t" style="left:1715.0px;top:824.8px;font-size:23.0px;line-height:23.0px;color:#666;transform:scaleX(0.9680);z-index:20;">Train your own Python or Scala</span>
<span class="t" style="left:1714.0px;top:856.8px;font-size:23.0px;line-height:23.0px;color:#666;transform:scaleX(1.0186);z-index:20;">models.</span>
<span class="t" style="left:2102.4px;top:840.8px;font-size:21.5px;line-height:21.5px;color:#9a9a9a;font-family:'Liberation Mono',monospace;transform:scaleX(0.9447);z-index:20;">&gt;&gt;&gt; clf =</span>
<span class="t" style="left:2102.1px;top:865.8px;font-size:21.5px;line-height:21.5px;color:#9a9a9a;font-family:'Liberation Mono',monospace;transform:scaleX(0.9535);z-index:20;">MyAlgo()</span>
<span class="t" style="left:1082.2px;top:1057.5px;font-size:24.5px;line-height:24.5px;color:#333;font-weight:bold;transform:scaleX(0.9439);z-index:20;">Name your analysis</span>
<span class="t" style="left:1330.0px;top:1061.5px;font-size:24.5px;line-height:24.5px;color:#333;transform:scaleX(0.9807);z-index:20;">High revenue analysis</span>
<span class="t" style="left:2143.9px;top:1060.0px;font-size:25.0px;line-height:25.0px;color:#3b99fc;font-weight:bold;transform:scaleX(0.8393);z-index:20;">CREATE</span>
<span class="t" style="left:1189.8px;top:190.4px;font-size:54.0px;line-height:54.0px;color:#fff;z-index:40;">4</span>
<span class="t" style="left:1650.4px;top:1045.4px;font-size:54.0px;line-height:54.0px;color:#fff;z-index:40;">5</span>
<span class="t" style="left:2166.0px;top:927.4px;font-size:54.0px;line-height:54.0px;color:#fff;z-index:40;">6</span>
<svg style="left:0;top:0;z-index:30" width="2549" height="1351" viewBox="0 0 2549 1351"><defs><filter id="ds" x="-30%" y="-30%" width="160%" height="170%"><feGaussianBlur in="SourceAlpha" stdDeviation="2.6"/><feOffset dx="0.5" dy="4.5"/><feComponentTransfer><feFuncA type="linear" slope="0.7"/></feComponentTransfer><feMerge><feMergeNode/><feMergeNode in="SourceGraphic"/></feMerge></filter>
<path id="pin" d="M-83.5 0 Q-50 -21.5 -19.2 -35.1 A40 40 0 1 1 -19.2 35.1 Q-50 21.5 -83.5 0 Z"/></defs>
<g fill="#ff5a4d" filter="url(#ds)">
<use href="#pin" transform="translate(1211 216.9)"/>
<use href="#pin" transform="translate(1674 1071.5)"/>
<use href="#pin" transform="translate(2183 947) rotate(-90)"/>
</g></svg>

</body></html>
